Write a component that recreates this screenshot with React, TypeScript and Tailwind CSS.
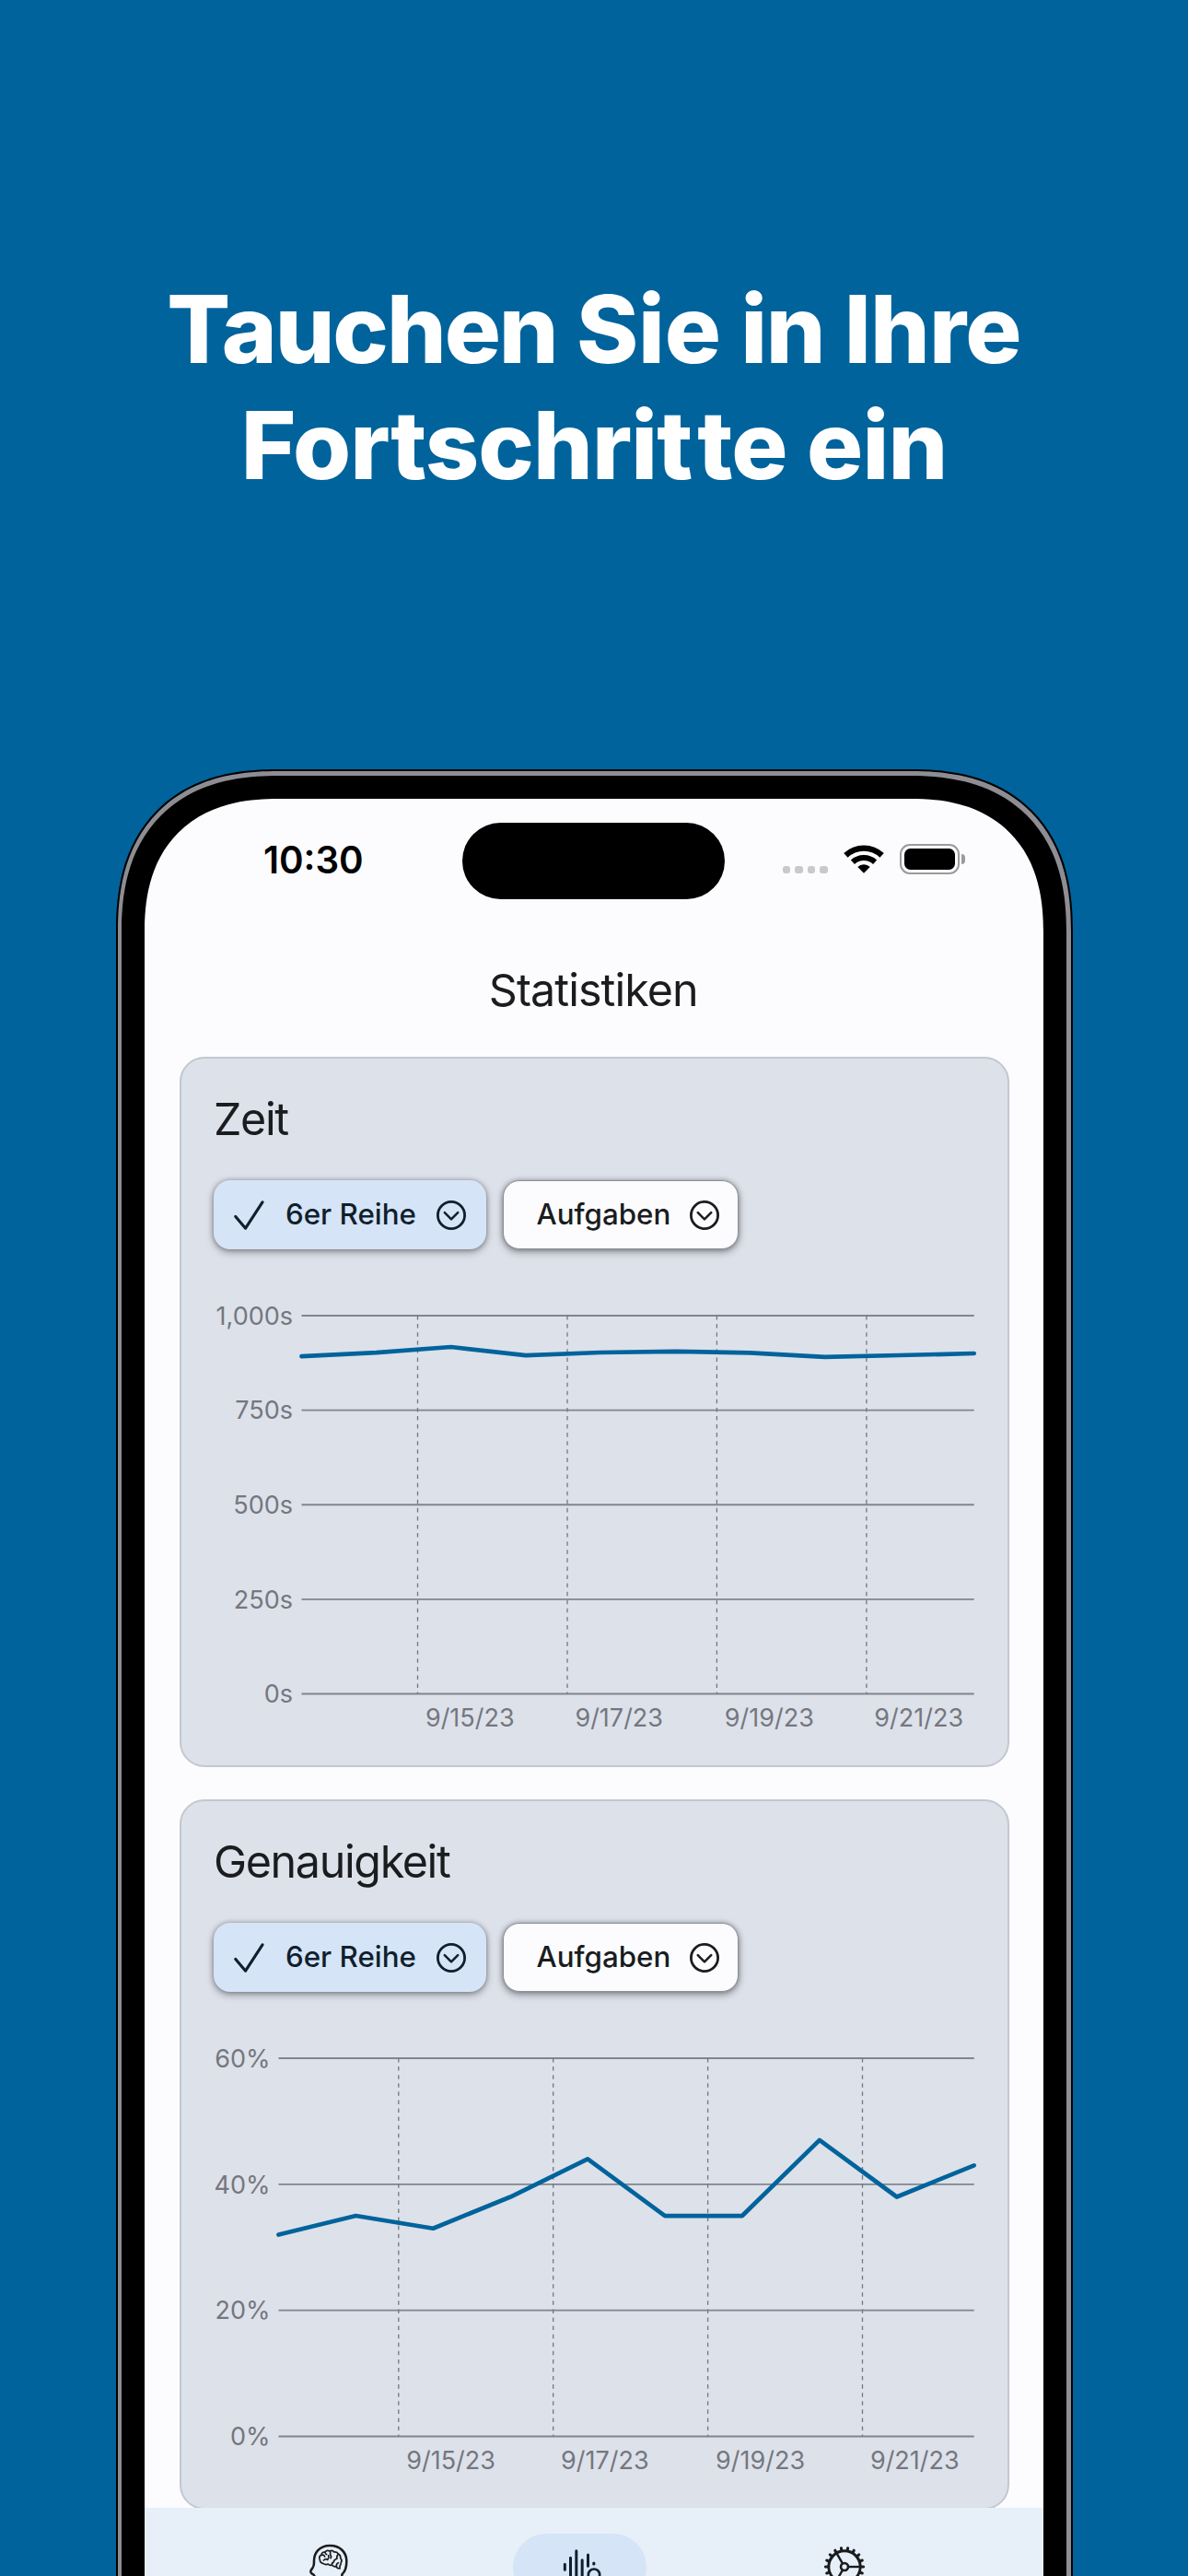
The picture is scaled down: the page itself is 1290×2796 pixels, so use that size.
type ChipProps = { label: string; selected?: boolean };

type ChartProps = {
  left: number;
  labelEnd: number;
  ticks: string[];
  dates: { x: number; label: string }[];
  points: [number, number][];
};

const TOP = 1428;
const BOTTOM = 1838.5;
const RIGHT = 1057.7;

const timePoints: [number, number][] = [
  [327.5, 1472.2],
  [408.6, 1468.2],
  [489.8, 1462],
  [570.9, 1471.2],
  [652, 1468],
  [733.2, 1466.8],
  [814.3, 1468.3],
  [895.5, 1472.8],
  [976.6, 1471],
  [1057.7, 1469],
];

const accuracy = [32, 35, 33, 38, 44, 35, 35, 47, 38, 43];
const accuracyPoints = accuracy.map((v, i): [number, number] => [
  302.5 + (i * (RIGHT - 302.5)) / (accuracy.length - 1),
  BOTTOM - (v / 60) * (BOTTOM - TOP),
]);

function ChevronCircle() {
  return (
    <svg className="size-8 shrink-0" viewBox="0 0 32 32" fill="none" stroke="currentColor" strokeLinecap="round" strokeLinejoin="round">
      <circle cx="16" cy="16" r="14.6" strokeWidth="2.8" />
      <path d="M8.8 13.2 16 20.4 23.2 13.2" strokeWidth="2.5" />
    </svg>
  );
}

function Chip({ label, selected }: ChipProps) {
  return (
    <div
      className={
        selected
          ? "flex h-[75px] w-[296px] items-center rounded-[18px] bg-[#d5e4f7] pr-[22px] pl-[22px] text-[#101f2c] shadow-[0_0_5px_rgba(0,0,0,0.26),0_3px_8px_rgba(0,0,0,0.36)]"
          : "flex h-[75px] w-[256px] items-center rounded-[18px] border-[1.5px] border-[#8b8f97] bg-[#fcfcff] pr-[20px] pl-[35.5px] text-[#1a1c1e] shadow-[0_0_5px_rgba(0,0,0,0.26),0_3px_8px_rgba(0,0,0,0.36)]"
      }
    >
      {selected && (
        <svg className="mr-[23px] h-8 w-[33px] shrink-0" viewBox="0 0 33 32" fill="none" stroke="currentColor" strokeWidth="3.1" strokeLinecap="round" strokeLinejoin="round">
          <path d="M1.8 17.4 12.6 30.2 31 1.8" />
        </svg>
      )}
      <span className="flex-1 text-[31.3px] leading-none font-medium whitespace-nowrap">{label}</span>
      <ChevronCircle />
    </div>
  );
}

function Chart({ left, labelEnd, ticks, dates, points }: ChartProps) {
  const step = (BOTTOM - TOP) / (ticks.length - 1);
  return (
    <svg className="block h-[540px] w-[896px]" viewBox="197 1356 896 540" fontFamily="Inter, sans-serif" fontSize="27">
      {ticks.map((tick, i) => (
        <g key={tick}>
          <line x1={left} x2={RIGHT} y1={TOP + i * step} y2={TOP + i * step} stroke="#74777f" strokeOpacity="0.88" strokeWidth="1.8" />
          <text x={labelEnd} y={TOP + i * step + 9.8} textAnchor="end" fill="#74777f">
            {tick}
          </text>
        </g>
      ))}
      {dates.map((d) => (
        <g key={d.label}>
          <line x1={d.x} x2={d.x} y1={TOP} y2={BOTTOM} stroke="#74777f" strokeWidth="1.3" strokeDasharray="4.54 4.54" />
          <text x={d.x + 8.4} y="1873.6" fill="#74777f">
            {d.label}
          </text>
        </g>
      ))}
      <polyline points={points.map((p) => p.join(",")).join(" ")} fill="none" stroke="#00639c" strokeWidth="4.7" strokeLinecap="round" strokeLinejoin="round" />
    </svg>
  );
}

function Card({ title, chart }: { title: string; chart: ChartProps }) {
  return (
    <section className="h-[771px] shrink-0 rounded-[27px] border-2 border-[#c3c7cf] bg-[#dde1ea]">
      <h2 className="h-[132px] pl-[35px] text-[48.4px] leading-[132px] tracking-[-1.35px] text-[#1a1c1e]">{title}</h2>
      <div className="flex gap-[18px] pl-[35px]">
        <Chip label="6er Reihe" selected />
        <Chip label="Aufgaben" />
      </div>
      <Chart {...chart} />
    </section>
  );
}

function StatusBar() {
  return (
    <div className="flex h-[134px] shrink-0 items-center">
      <div className="w-[345px] pl-[129px] text-[40.3px] font-semibold text-black">10:30</div>
      <div className="h-[83px] w-[285px] rounded-full bg-black" />
      <div className="mt-[20px] ml-[62.5px] flex gap-[5.1px]">
        {[0, 1, 2, 3].map((i) => (
          <div key={i} className="size-[8.5px] rounded-[3px] bg-[#c9c9cb]" />
        ))}
      </div>
      <svg className="mt-[-4px] ml-[17px] h-[32px] w-[44px]" viewBox="0 0 44 32">
        <g fill="none" stroke="#000">
          <path d="M2.4 12.4A28.5 28.5 0 0 1 41.6 12.4" strokeWidth="6.4" />
          <path d="M9.9 19.8A17.8 17.8 0 0 1 34.1 19.8" strokeWidth="6" />
        </g>
        <path d="M22 31.7 15.3 25A9.6 9.6 0 0 1 28.7 25Z" fill="#000" />
      </svg>
      <div className="mt-[-3px] ml-[17.5px] h-[33px] w-[64.5px] rounded-[11px] border-2 border-[#9b9b9d] p-[3px]">
        <div className="h-full w-full rounded-[6.5px] bg-black" />
      </div>
      <div className="mt-[-3px] ml-[2.5px] h-[11px] w-[4px] rounded-r-full bg-[#9b9b9d]" />
    </div>
  );
}

function BrainIcon() {
  return (
    <svg className="h-[36px] w-[46px]" viewBox="27 48 138 108" fill="none" stroke="#1a1c1e" strokeLinecap="round" strokeLinejoin="round">
      <path d="M50 160C50 152 47 152 42 149C34 144 37 137 42 132C47 125 48 120 48 113C46 80 66 57 100 57C134 57 154 80 154 108C154 130 149 142 139 151V160" strokeWidth="7.6" />
      <g strokeWidth="5">
        <path d="M94 117Q86 121 79 116Q67 114 67 103Q62 92 72 87Q73 77 84 78Q90 70 99 75Q108 70 113 78Q123 76 127 84Q136 88 134 98Q141 105 136 112Q136 119 132 123V132Q122 132 121 125Q111 127 106 120Q99 123 94 117Z" />
        <path d="M72 89Q80 84 83 93M84 79Q84 85 89 86M79 105Q86 98 92 103Q98 96 95 89M101 77V88Q106 92 102 98M127 85Q120 93 123 99Q112 103 111 112Q106 112 106 119M121 124Q120 116 127 113" />
      </g>
    </svg>
  );
}

function BarsIcon() {
  return (
    <svg className="h-[46px] w-[50px]" viewBox="852 60 150 138" fill="none" stroke="#101f2c" strokeLinecap="round">
      <path d="M865 118V136M883.500 97V170M902.500 74V180M921.500 104V170M940.500 87V124" strokeWidth="9" />
      <path d="M959.500 114.500V117" strokeWidth="9.500" />
      <circle cx="960" cy="152" r="18.5" strokeWidth="8" />
    </svg>
  );
}

function GearIcon() {
  const teeth = Array.from({ length: 18 }, (_, i) => i * 20);
  return (
    <svg className="size-[44px]" viewBox="-22 -22 44 44" fill="none" stroke="#1a1c1e">
      <circle r="17.2" strokeWidth="3" />
      {teeth.map((a) => (
        <line key={a} x1="18" x2="20.5" y1="0" y2="0" strokeWidth="3.1" strokeLinecap="round" transform={`rotate(${a})`} />
      ))}
      <circle r="4" strokeWidth="2.6" />
      {[0, 120, 240].map((a) => (
        <line key={a} x1="4.500" x2="17" y1="0" y2="0" strokeWidth="2.4" transform={`rotate(${a})`} />
      ))}
    </svg>
  );
}

function NavBar() {
  return (
    <nav className="flex h-[74px] shrink-0 bg-[#e7eff8] pt-[27.5px] pl-[127.5px]">
      <div className="flex h-[73px] w-[145px] justify-center pt-[10.5px]">
        <BrainIcon />
      </div>
      <div className="ml-[127px] flex h-[73px] w-[145px] justify-center rounded-full bg-[#d5e4f7] pt-[14.5px] pl-[9px]">
        <BarsIcon />
      </div>
      <div className="ml-[142.5px] flex h-[73px] w-[146px] justify-center pt-[14.5px]">
        <GearIcon />
      </div>
    </nav>
  );
}

export default function App() {
  return (
    <div className="h-[2796px] w-[1290px] overflow-hidden bg-[#00639c] font-['Inter',sans-serif]">
      <h1 className="h-[835px] pt-[294px] text-center text-[102px] leading-[126px] font-extrabold text-white">
        <span className="block tracking-[-0.8px]">
          <span className="tracking-[-2.1px]">Tauchen</span> <span className="tracking-[-0.3px]">Sie</span>{" "}
          <span className="tracking-[-1.3px]">in</span> <span className="tracking-[-0.8px]">Ihre</span>
        </span>
        <span className="block tracking-[-0.9px]">
          Fortschri<span className="tracking-[5px]">t</span>te ein
        </span>
      </h1>
      <div className="ml-[126px] h-[1961px] w-[1039px] rounded-t-[176px] bg-black px-[2px] pt-[2px] [corner-shape:superellipse(1.25)]">
        <div className="h-full rounded-t-[174px] bg-[#8e8d93] pt-[5px] pr-[5px] pl-[4px] [corner-shape:superellipse(1.25)]">
          <div className="h-full rounded-t-[170px] bg-black px-[25px] pt-[25px] [corner-shape:superellipse(1.25)]">
            <main className="flex h-[1929px] w-[976px] flex-col overflow-hidden rounded-t-[145px] bg-[#fcfcff] [corner-shape:superellipse(1.25)]">
              <StatusBar />
              <div className="h-[146px] shrink-0 pr-[1.5px] text-center text-[48.4px] leading-[148px] tracking-[-0.95px] text-[#1a1c1e]">Statistiken</div>
              <div className="flex min-h-0 flex-1 flex-col gap-[35px] overflow-hidden pr-[37.5px] pl-[38px]">
                <Card
                  title="Zeit"
                  chart={{
                    left: 327.5,
                    labelEnd: 318,
                    ticks: ["1,000s", "750s", "500s", "250s", "0s"],
                    dates: [
                      { x: 453.5, label: "9/15/23" },
                      { x: 616, label: "9/17/23" },
                      { x: 778.4, label: "9/19/23" },
                      { x: 940.9, label: "9/21/23" },
                    ],
                    points: timePoints,
                  }}
                />
                <Card
                  title="Genauigkeit"
                  chart={{
                    left: 302.5,
                    labelEnd: 293.5,
                    ticks: ["60%", "40%", "20%", "0%"],
                    dates: [
                      { x: 432.8, label: "9/15/23" },
                      { x: 600.7, label: "9/17/23" },
                      { x: 768.6, label: "9/19/23" },
                      { x: 936.5, label: "9/21/23" },
                    ],
                    points: accuracyPoints,
                  }}
                />
              </div>
              <NavBar />
            </main>
          </div>
        </div>
      </div>
    </div>
  );
}
